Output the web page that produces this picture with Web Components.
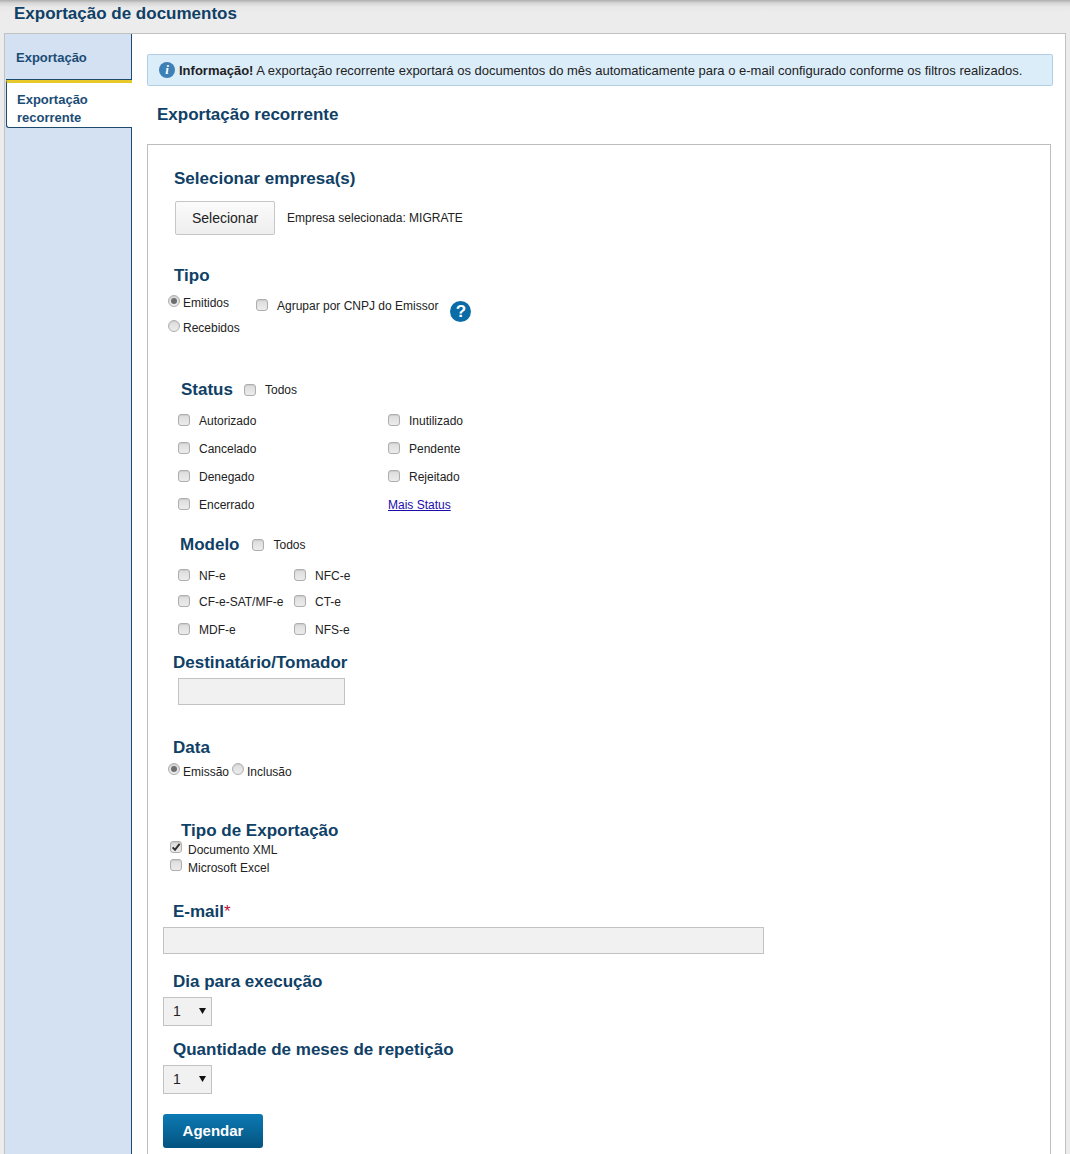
<!DOCTYPE html>
<html lang="pt-BR">
<head>
<meta charset="utf-8">
<title>Exportação de documentos</title>
<style>
    html, body { margin: 0; height: 1154px; overflow: hidden; background: #ececec; }
    body { font-family: "Liberation Sans", Arial, sans-serif; font-size: 12px; color: #222; }
</style>
</head>
<body>
<doc-shell>
    <span slot="title">Exportação de documentos</span>
    <side-nav slot="nav">
        <nav-tab>Exportação</nav-tab>
        <nav-tab active>Exportação<br>recorrente</nav-tab>
    </side-nav>
    <info-alert><b>Informação!</b> A exportação recorrente exportará os documentos do mês automaticamente para o e-mail configurado conforme os filtros realizados.</info-alert>
    <page-title>Exportação recorrente</page-title>
    <form-card>
        <form-block top="23" left="11"><sec-title>Selecionar empresa(s)</sec-title></form-block>
        <form-block top="13" left="12" class="row">
            <app-button>Selecionar</app-button>
            <span style="margin-left:12px">Empresa selecionada: MIGRATE</span>
        </form-block>

        <form-block top="30" left="11"><sec-title>Tipo</sec-title></form-block>
        <form-block top="5" left="5" class="row-top">
            <div style="width:88px">
                <opt-check type="radio" checked gap="3" h="25" lift="4">Emitidos</opt-check>
                <opt-check type="radio" gap="3" h="25" lift="4">Recebidos</opt-check>
            </div>
            <opt-check gap="9" h="25" style="margin-top:3px" lift="2">Agrupar por CNPJ do Emissor</opt-check>
            <help-badge style="margin:11px 0 0 12px"></help-badge>
        </form-block>

        <form-block top="40" left="18" class="row">
            <sec-title inline>Status</sec-title>
            <opt-check gap="9" h="20" style="margin-left:11px">Todos</opt-check>
        </form-block>
        <form-block top="7" left="15">
            <opt-grid columns="210px 120px" rows="28px 28px 28px 28px">
                <opt-check gap="9" h="28" lift="2">Autorizado</opt-check>
                <opt-check gap="9" h="28" lift="2">Inutilizado</opt-check>
                <opt-check gap="9" h="28" lift="2">Cancelado</opt-check>
                <opt-check gap="9" h="28" lift="2">Pendente</opt-check>
                <opt-check gap="9" h="28" lift="2">Denegado</opt-check>
                <opt-check gap="9" h="28" lift="2">Rejeitado</opt-check>
                <opt-check gap="9" h="28" lift="2">Encerrado</opt-check>
                <a href="#" style="color:#1a0dab;line-height:28px">Mais Status</a>
            </opt-grid>
        </form-block>

        <form-block top="16" left="17" class="row">
            <sec-title inline>Modelo</sec-title>
            <opt-check gap="10" h="20" style="margin-left:12px">Todos</opt-check>
        </form-block>
        <form-block top="8" left="15">
            <opt-grid columns="116px 80px" rows="25px 28px 28px">
                <opt-check gap="9" h="25" lift="1">NF-e</opt-check>
                <opt-check gap="9" h="25" lift="1">NFC-e</opt-check>
                <opt-check gap="9" h="28" lift="2">CF-e-SAT/MF-e</opt-check>
                <opt-check gap="9" h="28" lift="2">CT-e</opt-check>
                <opt-check gap="9" h="28" lift="2">MDF-e</opt-check>
                <opt-check gap="9" h="28" lift="2">NFS-e</opt-check>
            </opt-grid>
        </form-block>

        <form-block top="8" left="10"><sec-title>Destinatário/Tomador</sec-title></form-block>
        <form-block top="6" left="15"><text-field w="167"></text-field></form-block>

        <form-block top="32" left="10"><sec-title>Data</sec-title></form-block>
        <form-block top="3" left="5" class="row">
            <opt-check type="radio" checked gap="3" h="24" lift="6">Emissão</opt-check>
            <opt-check type="radio" gap="3" h="24" lift="6" style="margin-left:3px">Inclusão</opt-check>
        </form-block>

        <form-block top="36" left="18"><sec-title>Tipo de Exportação</sec-title></form-block>
        <form-block top="1" left="7">
            <opt-check checked gap="6" h="18" lift="6">Documento XML</opt-check>
            <opt-check gap="6" h="18" lift="6">Microsoft Excel</opt-check>
        </form-block>

        <form-block top="24" left="10"><sec-title>E-mail<span style="color:#c0143c;font-weight:400">*</span></sec-title></form-block>
        <form-block top="6"><text-field w="601"></text-field></form-block>

        <form-block top="17" left="10"><sec-title>Dia para execução</sec-title></form-block>
        <form-block top="6"><num-select></num-select></form-block>

        <form-block top="13" left="10"><sec-title>Quantidade de meses de repetição</sec-title></form-block>
        <form-block top="6"><num-select></num-select></form-block>

        <form-block top="20"><app-button primary>Agendar</app-button></form-block>
    </form-card>
</doc-shell>

<script>
class DocShell extends HTMLElement {
    constructor() {
        super();
        this.attachShadow({ mode: 'open' });
        this.shadowRoot.innerHTML = `
            <style>
                :host { display: block; height: 1154px; overflow: hidden; }
                header {
                    height: 33px;
                    box-sizing: border-box;
                    padding: 4px 0 0 14px;
                    line-height: 19px;
                    font-size: 17px;
                    font-weight: bold;
                    color: #0f4066;
                    background: linear-gradient(#adadad 0, #d6d6d6 3px, #e8e8e8 7px, #ececec 12px);
                }
                .frame {
                    display: flex;
                    margin: 0 4px;
                    height: 1121px;
                    box-sizing: border-box;
                    border: 1px solid #c2c2c2;
                    border-bottom: 0;
                    background: #fff;
                }
                .main { flex: 1; min-width: 0; padding: 20px 12px 0 15px; }
            </style>
            <header><slot name="title"></slot></header>
            <div class="frame">
                <slot name="nav"></slot>
                <div class="main"><slot></slot></div>
            </div>
        `;
    }
}

class SideNav extends HTMLElement {
    constructor() {
        super();
        this.attachShadow({ mode: 'open' });
        this.shadowRoot.innerHTML = `
            <style>
                :host {
                    display: block;
                    width: 126px;
                    flex: none;
                    background: #d3e1f3;
                    border-right: 1px solid #1d4b70;
                }
            </style>
            <slot></slot>
        `;
    }
}

class NavTab extends HTMLElement {
    constructor() {
        super();
        this.attachShadow({ mode: 'open' });
        this.shadowRoot.innerHTML = `
            <style>
                :host {
                    display: block;
                    box-sizing: border-box;
                    height: 46px;
                    padding: 15px 0 0 11px;
                    font-size: 13px;
                    font-weight: bold;
                    line-height: 18px;
                    color: #1b4c75;
                }
                :host([active]) {
                    position: relative;
                    height: 48px;
                    margin: 0 -1px 0 1px;
                    padding: 8px 0 0 10px;
                    background: #fff;
                    border-top: 3px solid #e8c92c;
                    border-left: 1px solid #1d4b70;
                    border-bottom: 1px solid #1d4b70;
                    border-bottom-left-radius: 3px;
                    box-shadow: 0 -1px 0 #1d4b70;
                }
            </style>
            <slot></slot>
        `;
    }
}

class InfoAlert extends HTMLElement {
    constructor() {
        super();
        this.attachShadow({ mode: 'open' });
        this.shadowRoot.innerHTML = `
            <style>
                :host {
                    display: flex;
                    align-items: center;
                    box-sizing: border-box;
                    height: 32px;
                    padding-left: 11px;
                    border: 1px solid #b3d0e2;
                    border-radius: 2px;
                    background: #dcedfa;
                    font-size: 13px;
                    color: #222;
                    white-space: nowrap;
                }
                i {
                    width: 16px;
                    height: 16px;
                    margin-right: 4px;
                    border-radius: 50%;
                    background: #3d80b6;
                    color: #fff;
                    font: italic bold 13px/16px "Liberation Serif", serif;
                    text-align: center;
                }
                div { white-space: pre-wrap; }
            </style>
            <i>i</i><div><slot></slot></div>
        `;
    }
}

class PageTitle extends HTMLElement {
    constructor() {
        super();
        this.attachShadow({ mode: 'open' });
        this.shadowRoot.innerHTML = `
            <style>
                :host {
                    display: block;
                    margin: 19px 0 19px 10px;
                    font-size: 17px;
                    font-weight: bold;
                    line-height: 20px;
                    color: #0f4066;
                }
            </style>
            <slot></slot>
        `;
    }
}

class FormCard extends HTMLElement {
    constructor() {
        super();
        this.attachShadow({ mode: 'open' });
        this.shadowRoot.innerHTML = `
            <style>
                :host {
                    display: block;
                    width: 904px;
                    height: 1100px;
                    box-sizing: border-box;
                    margin-right: -2px;
                    padding-left: 15px;
                    border: 1px solid #bdbdbd;
                    background: #fff;
                }
                /* the first heading's margin stays inside the card */
                :host { padding-top: 0.02px; }
            </style>
            <slot></slot>
        `;
    }
}

class FormBlock extends HTMLElement {
    constructor() {
        super();
        this.attachShadow({ mode: 'open' });
        this.shadowRoot.innerHTML = `
            <style>
                :host { display: block; }
                :host(.row), :host(.row-top) { display: flex; align-items: center; }
                :host(.row-top) { align-items: flex-start; }
            </style>
            <slot></slot>
        `;
    }

    connectedCallback() {
        this.style.marginTop = (this.getAttribute('top') || 0) + 'px';
        this.style.marginLeft = (this.getAttribute('left') || 0) + 'px';
    }
}

class SecTitle extends HTMLElement {
    constructor() {
        super();
        this.attachShadow({ mode: 'open' });
        this.shadowRoot.innerHTML = `
            <style>
                :host {
                    display: block;
                    font-size: 17px;
                    font-weight: bold;
                    line-height: 22px;
                    margin-bottom: -2px;
                    color: #0f4066;
                    white-space: nowrap;
                }
                :host([inline]) { line-height: 20px; margin-bottom: 0; }
            </style>
            <slot></slot>
        `;
    }
}

class OptCheck extends HTMLElement {
    constructor() {
        super();
        this.attachShadow({ mode: 'open' });
        const isRadio = this.getAttribute('type') === 'radio';
        const checked = this.hasAttribute('checked');
        const mark = checked && !isRadio
            ? '<svg viewBox="0 0 12 12" width="12" height="12"><path d="M2.6 6.4 5 8.8 9.6 2.8" fill="none" stroke="#333" stroke-width="2"/></svg>'
            : '';
        this.shadowRoot.innerHTML = `
            <style>
                :host {
                    display: flex;
                    align-items: center;
                    font-size: 12px;
                    color: #222;
                    white-space: nowrap;
                }
                .box {
                    display: flex;
                    align-items: center;
                    justify-content: center;
                    width: 12px;
                    height: 12px;
                    flex: none;
                    box-sizing: border-box;
                    border: 1px solid #aeaeae;
                    border-radius: 3px;
                    background: linear-gradient(#dcdcdc, #ececec);
                    box-shadow: inset 0 1px 1px rgba(0,0,0,.08);
                }
                .box.radio { border-radius: 50%; }
                .dot { width: 6px; height: 6px; border-radius: 50%; background: #6e6e6e; }
                svg { flex: none; }
            </style>
            <span class="box ${isRadio ? 'radio' : ''}">${checked && isRadio ? '<span class="dot"></span>' : mark}</span>
            <span class="label"><slot></slot></span>
        `;
        this.shadowRoot.querySelector('.label').style.marginLeft = (this.getAttribute('gap') || 6) + 'px';
        this.shadowRoot.querySelector('.box').style.marginBottom = (this.getAttribute('lift') || 0) + 'px';
        if (this.hasAttribute('h')) this.style.height = this.getAttribute('h') + 'px';
    }
}

class OptGrid extends HTMLElement {
    constructor() {
        super();
        this.attachShadow({ mode: 'open' });
        this.shadowRoot.innerHTML = `
            <style>
                :host { display: grid; }
            </style>
            <slot></slot>
        `;
    }

    connectedCallback() {
        this.style.gridTemplateColumns = this.getAttribute('columns');
        this.style.gridTemplateRows = this.getAttribute('rows');
    }
}

class HelpBadge extends HTMLElement {
    constructor() {
        super();
        this.attachShadow({ mode: 'open' });
        this.shadowRoot.innerHTML = `
            <style>
                :host {
                    display: block;
                    width: 21px;
                    height: 21px;
                    border-radius: 50%;
                    background: #0a6ca6;
                    color: #fff;
                    font: bold 17px/21px "Liberation Sans", sans-serif;
                    text-align: center;
                }
            </style>
            ?
        `;
    }
}

class TextField extends HTMLElement {
    constructor() {
        super();
        this.attachShadow({ mode: 'open' });
        this.shadowRoot.innerHTML = `
            <style>
                :host { display: block; }
                input {
                    display: block;
                    box-sizing: border-box;
                    height: 27px;
                    padding: 0 6px;
                    border: 1px solid #c3c3c3;
                    border-radius: 0;
                    background: #f1f1f1;
                    outline: 0;
                }
            </style>
            <input type="text">
        `;
    }

    connectedCallback() {
        this.shadowRoot.querySelector('input').style.width = this.getAttribute('w') + 'px';
    }
}

class NumSelect extends HTMLElement {
    constructor() {
        super();
        this.attachShadow({ mode: 'open' });
        this.shadowRoot.innerHTML = `
            <style>
                :host {
                    display: flex;
                    align-items: center;
                    justify-content: space-between;
                    width: 49px;
                    height: 29px;
                    box-sizing: border-box;
                    padding: 0 5px 2px 9px;
                    border: 1px solid #c3c3c3;
                    background: #f1f1f1;
                    font-size: 14px;
                    color: #222;
                }
                svg { display: block; margin-top: -1px; }
            </style>
            <span>1</span>
            <svg viewBox="0 0 7 7" width="7" height="7"><path d="M0 1h7L3.5 7z" fill="#111"/></svg>
        `;
    }
}

class AppButton extends HTMLElement {
    constructor() {
        super();
        this.attachShadow({ mode: 'open' });
        this.shadowRoot.innerHTML = `
            <style>
                :host {
                    display: flex;
                    align-items: center;
                    justify-content: center;
                    width: 100px;
                    height: 34px;
                    box-sizing: border-box;
                    border: 1px solid #c6c6c6;
                    border-radius: 2px;
                    background: linear-gradient(#fbfbfb, #eeeeee);
                    font-size: 14px;
                    color: #222;
                }
                :host([primary]) {
                    padding-bottom: 2px;
                    border: 0;
                    border-radius: 3px;
                    background: linear-gradient(#0c7ab4, #04537f);
                    color: #fff;
                    font-size: 15px;
                    font-weight: bold;
                }
            </style>
            <slot></slot>
        `;
    }
}

customElements.define('doc-shell', DocShell);
customElements.define('side-nav', SideNav);
customElements.define('nav-tab', NavTab);
customElements.define('info-alert', InfoAlert);
customElements.define('page-title', PageTitle);
customElements.define('form-card', FormCard);
customElements.define('form-block', FormBlock);
customElements.define('sec-title', SecTitle);
customElements.define('opt-check', OptCheck);
customElements.define('opt-grid', OptGrid);
customElements.define('help-badge', HelpBadge);
customElements.define('text-field', TextField);
customElements.define('num-select', NumSelect);
customElements.define('app-button', AppButton);
</script>
</body>
</html>
